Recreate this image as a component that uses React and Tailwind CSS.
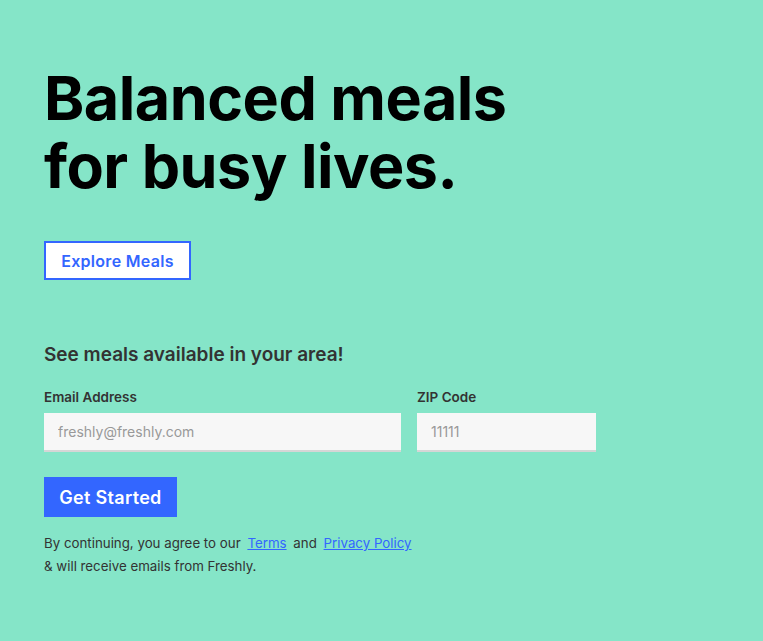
import React from "react";

export default function App() {
  return (
    <div
      className="min-h-[641px] w-full bg-[#85e5c8] px-[44px] pt-[64px]"
      style={{ fontFamily: "Inter, 'Noto Sans', sans-serif" }}
    >
      <h1 className="text-[61px] font-bold leading-[68px] tracking-[-0.5px] text-black">
        Balanced meals
        <br />
        for busy lives.
      </h1>

      <button className="mt-[41px] h-[39px] w-[147px] border-2 border-[#3366ff] bg-white text-[16px] font-semibold tracking-[0.3px] text-[#3366ff]">
        Explore Meals
      </button>

      <h2 className="mt-[63px] text-[19px] font-semibold leading-6 text-[#333]">
        See meals available in your area!
      </h2>

      <div className="mt-[22px] flex gap-[16px]">
        <div className="flex w-[357px] flex-col">
          <label className="text-[13.5px] font-semibold leading-4 text-[#333]">
            Email Address
          </label>
          <input
            className="mt-[8px] h-[39px] w-full border-b-2 border-[#d6d6d6] bg-[#f7f7f7] px-[14px] text-[14px] text-[#333] outline-none placeholder:text-[#999]"
            placeholder="freshly@freshly.com"
          />
        </div>
        <div className="flex w-[179px] flex-col">
          <label className="text-[13.5px] font-semibold leading-4 text-[#333]">
            ZIP Code
          </label>
          <input
            className="mt-[8px] h-[39px] w-full border-b-2 border-[#d6d6d6] bg-[#f7f7f7] px-[14px] text-[14px] text-[#333] outline-none placeholder:text-[#999]"
            placeholder="11111"
          />
        </div>
      </div>

      <button className="mt-[25px] h-[40px] w-[133px] bg-[#3366ff] text-[18px] font-semibold tracking-[0.3px] text-white">
        Get Started
      </button>

      <p className="mt-[15px] text-[13.3px] leading-[23px] text-[#333]">
        By continuing, you agree to our{" "}
        <a href="#" className="mx-[3px] text-[#3366ff] underline">
          Terms
        </a>{" "}
        and{" "}
        <a href="#" className="mx-[3px] text-[#3366ff] underline">
          Privacy Policy
        </a>
        <br />& will receive emails from Freshly.
      </p>
    </div>
  );
}
